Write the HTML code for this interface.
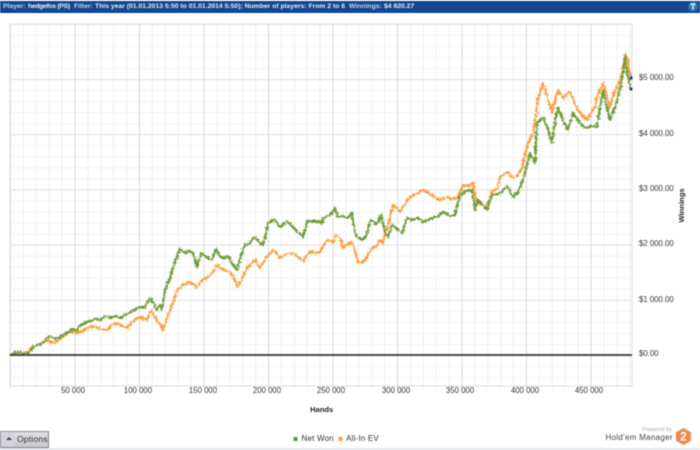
<!DOCTYPE html>
<html><head><meta charset="utf-8">
<style>
html,body{margin:0;padding:0;background:#fff}
#p{position:relative;width:700px;height:450px;overflow:hidden;background:#fff;font-family:"Liberation Sans",sans-serif;color:#333;filter:blur(.45px)}
#h{position:absolute;left:0;top:1px;width:700px;height:12px;background:#13468f;color:#c3d6ec;font-size:6.8px;line-height:12px;font-weight:bold;white-space:pre}
.t{position:absolute;font-size:7.8px;line-height:10px;white-space:nowrap;color:#333}
.x{width:60px;text-align:center;top:386px}
#foot{position:absolute;left:0;top:448px;width:700px;height:2px;background:#e2e7ec}
#btn{position:absolute;left:0;top:431px;width:47px;height:15px;border:1px solid #85878c;background:linear-gradient(#dedee4,#c8c8d0);font-size:8.5px;line-height:15px;color:#333}
</style></head><body>
<div id="p">
<div id="h"><span style="position:absolute;left:3px">Player:</span><span style="position:absolute;left:28px;color:#e6eef8;letter-spacing:-.3px">hedgefox (PS)</span><span style="position:absolute;left:74px">Filter:</span><span style="position:absolute;left:95px;color:#e6eef8;letter-spacing:.0px">This year (01.01.2013 5:50 to 01.01.2014 5:50); Number of players: From 2 to 6</span><span style="position:absolute;left:349px">Winnings:</span><span style="position:absolute;left:384px;color:#e6eef8">$4 820.27</span></div>
<svg width="700" height="450" style="position:absolute;left:0;top:0">
<defs>
<pattern id="mv" patternUnits="userSpaceOnUse" x="10" y="0" width="12.9" height="10"><rect x="0" width="1" height="10" fill="#efefef"/></pattern>
<pattern id="Mv" patternUnits="userSpaceOnUse" x="10" y="0" width="64.5" height="10"><rect x="0" width="1" height="10" fill="#d8d8d8"/></pattern>
<pattern id="mh" patternUnits="userSpaceOnUse" x="0" y="355" width="10" height="11.04"><rect y="0" width="10" height="1" fill="#f3f3f3"/></pattern>
<pattern id="Mh" patternUnits="userSpaceOnUse" x="0" y="355" width="10" height="55.2"><rect y="0" width="10" height="1" fill="#e0e0e0"/></pattern>
<filter id="j" x="-5%" y="-5%" width="110%" height="110%"><feTurbulence type="fractalNoise" baseFrequency="0.5" numOctaves="2" seed="4"/><feDisplacementMap in="SourceGraphic" scale="5" xChannelSelector="R" yChannelSelector="G"/></filter>
</defs>
<rect x="10" y="24" width="622" height="364" fill="url(#mh)"/>
<rect x="10" y="24" width="622" height="364" fill="url(#mv)"/>
<rect x="10" y="24" width="622" height="364" fill="url(#Mh)"/>
<rect x="10" y="24" width="622" height="364" fill="url(#Mv)"/>
<rect x="10" y="23.5" width="622" height="1" fill="#e2e2e2"/>
<rect x="10" y="385.5" width="622" height="1" fill="#dcdcdc"/>
<rect x="9.5" y="24" width="1" height="362" fill="#dcdcdc"/>
<rect x="631.5" y="24" width="1" height="362" fill="#dcdcdc"/>
<g filter="url(#j)" fill="none" stroke-linejoin="round">
<polyline stroke="#fa9f3d" stroke-width="2.3" points="13,353 20,353 27,352 32,347 38,345 42,343 47,340 51,342 55,343 60,339 67,333 72,332 77,333 82,331 87,328 93,326 100,329 107,330 111,326 115,323 120,325 127,328 131,323 137,318 142,318 147,320 151,310 155,318 160,324 163,330 167,318 170,310 174,300 177,290 182,286 188,282 192,283 197,287 202,280 208,277 213,272 217,265 222,269 230,272 234,278 238,287 243,276 247,268 251,264 255,260 260,268 266,258 273,250 277,254 280,258 287,254 293,253 298,257 303,261 307,255 310,252 315,253 320,252 324,245 327,240 333,242 336,235 340,238 343,248 348,244 352,242 355,250 358,262 362,263 366,258 372,248 376,247 380,240 383,243 385,233 389,222 393,205 397,208 400,212 405,204 410,197 416,194 423,190 430,194 436,198 440,200 447,197 452,199 457,198 460,192 463,185 468,186 473,183 475,194 477,203 482,205 487,208 490,199 493,190 497,189 500,177 503,175 508,172 513,178 517,176 522,168 525,155 528,143 533,133 536,115 538,98 541,90 543,83 545,90 549,102 552,113 555,100 558,90 563,98 566,95 570,92 574,102 578,110 583,116 587,120 591,113 595,107 597,97 600,90 603,83 607,96 610,107 613,97 615,90 619,83 622,73 624,62 625,54 628,60 629,70 631,77"/>
<polyline stroke="#6f9c3a" stroke-width="2.3" points="10,355 14,353 20,352 26,354 30,352 33,347 38,345 42,344 46,339 50,336 55,339 60,337 65,334 72,329 76,331 80,326 86,322 90,321 96,319 100,320 105,316 110,318 115,316 120,318 125,315 132,311 138,308 145,307 150,298 154,304 157,310 160,305 162,310 165,290 170,278 175,262 180,249 185,253 190,251 193,253 197,267 201,253 206,257 212,260 216,249 220,256 223,258 228,256 232,263 237,270 241,256 245,245 250,243 254,237 258,241 263,245 266,232 268,223 274,219 280,227 287,221 293,227 298,232 303,237 306,226 308,221 315,221 322,223 323,218 330,215 335,208 338,217 343,216 347,218 352,213 355,233 357,237 362,240 366,236 370,222 372,220 377,225 381,215 385,232 388,237 392,225 397,229 402,233 405,224 407,218 412,220 418,218 423,222 430,219 437,217 443,212 450,216 455,215 458,203 460,195 466,191 472,190 475,210 478,200 483,205 487,210 490,200 492,195 497,194 502,192 507,185 510,192 513,197 518,192 523,180 527,165 530,153 535,163 536,140 537,123 543,117 548,130 552,143 555,122 558,107 563,120 568,130 573,113 579,122 585,128 591,126 597,127 600,108 603,90 607,108 610,120 615,107 620,90 623,72 625,57 627,73 629,80 630,89"/>
</g>
<rect x="10" y="354" width="622" height="2" fill="#4a4a48"/>
<rect x="630" y="76.5" width="2.4" height="3" fill="#1a22e0"/>
<rect x="630" y="87.5" width="2.4" height="3" fill="#1a22e0"/>
<circle cx="693" cy="6.5" r="5" fill="#2f78ac"/>
<rect x="692.2" y="5" width="1.6" height="4.5" fill="#d6e6f2"/><rect x="690.5" y="3.4" width="5" height="1.8" fill="#d6e6f2"/>
<polygon points="683.5,428 691,432.2 691,440.8 683.5,445 676,440.8 676,432.2" fill="#f08a4b"/>
<text x="683.5" y="440.5" text-anchor="middle" font-family="Liberation Sans" font-weight="bold" font-size="11.5" fill="#fff">2</text>
<rect x="293.5" y="437" width="4" height="4" fill="#5f9138"/>
<rect x="338.5" y="437" width="4" height="4" fill="#fb9f3f"/>
<text transform="translate(684,205.5) rotate(-90)" text-anchor="middle" font-family="Liberation Sans" font-weight="bold" font-size="7.6" fill="#222">Winnings</text>
</svg>
<div class="t x" style="left:43px">50 000</div>
<div class="t x" style="left:108px">100 000</div>
<div class="t x" style="left:173px">150 000</div>
<div class="t x" style="left:237px">200 000</div>
<div class="t x" style="left:301px">250 000</div>
<div class="t x" style="left:366px">300 000</div>
<div class="t x" style="left:430px">350 000</div>
<div class="t x" style="left:495px">400 000</div>
<div class="t x" style="left:559px">450 000</div>
<div class="t" style="left:639px;top:73px">$5 000.00</div>
<div class="t" style="left:639px;top:129px">$4 000.00</div>
<div class="t" style="left:639px;top:184px">$3 000.00</div>
<div class="t" style="left:639px;top:239px">$2 000.00</div>
<div class="t" style="left:639px;top:295px">$1 000.00</div>
<div class="t" style="left:639px;top:349px">$0.00</div>
<div class="t" style="left:310px;top:405px;font-weight:bold;color:#222;font-size:7.6px">Hands</div>
<div class="t" style="left:301.5px;top:434px;font-size:8px;letter-spacing:.2px">Net Won</div>
<div class="t" style="left:346px;top:434px;font-size:8px;letter-spacing:.2px">All-In EV</div>
<div class="t" style="left:642.5px;top:425px;font-size:5.6px;color:#aaa">Powered by</div>
<div class="t" style="left:605.5px;top:433px;font-size:8px;letter-spacing:.3px;color:#444">Hold'em Manager</div>
<div id="btn"><span style="position:absolute;left:1px;top:1px;width:12px;height:13px;background:#d4d4dc"></span><span style="position:absolute;left:5px;top:5px;width:0;height:0;border-left:3px solid transparent;border-right:3px solid transparent;border-bottom:3px solid #444"></span><span style="position:absolute;left:16px;top:0;letter-spacing:.2px">Options</span></div>
<div id="foot"></div>
</div>
</body></html>
